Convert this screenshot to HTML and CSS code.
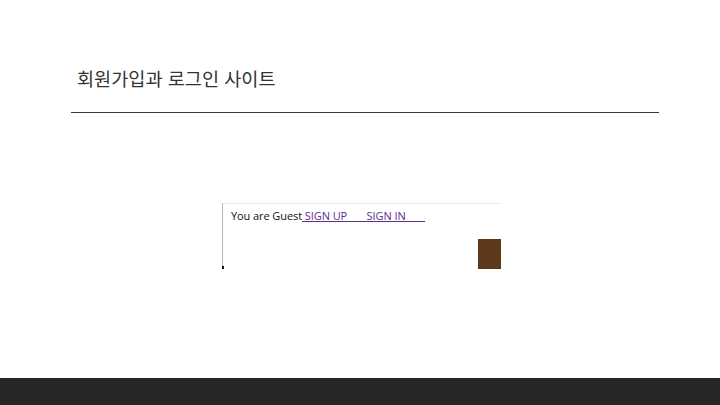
FILE: index.html
```html
<!DOCTYPE html>
<html lang="ko">
<head>
<meta charset="utf-8">
<link rel="stylesheet" href="styles.css">
</head>
<body>
<div class="slide">
  <main class="content">
    <h1 class="title">회원가입과 로그인 사이트</h1>
    <hr class="rule">
    <div class="shot-wrap">
      <div class="shot">
        <div class="shot-bar">
          <span class="guest">You are Guest</span><a class="link" href="#">&nbsp;SIGN UP&nbsp;&nbsp;&nbsp;&nbsp;&nbsp;&nbsp;&nbsp;SIGN IN&nbsp;&nbsp;&nbsp;&nbsp;&nbsp;&nbsp;&nbsp;</a>
        </div>
        <div class="shot-body">
          <div class="brown"></div>
        </div>
      </div>
    </div>
  </main>
  <footer class="footer"></footer>
</div>
</body>
</html>
```

FILE: styles.css
```css
html, body {
  margin: 0;
  padding: 0;
  background: #ffffff;
}
.slide {
  width: 720px;
  height: 405px;
  display: flex;
  flex-direction: column;
  overflow: hidden;
}
.content {
  flex: 1;
  display: flex;
  flex-direction: column;
  padding: 0 61px 0 71px;
}
.title {
  margin: 66px 0 0 6px;
  font-family: "Noto Sans CJK KR", "Noto Sans", sans-serif;
  font-weight: 400;
  font-size: 18.6px;
  line-height: 24px;
  color: #333333;
  height: 24px;
}
.rule {
  margin: 22px 0 0 0;
  border: 0;
  border-top: 1px solid #3a3a3a;
  height: 0;
}
.shot-wrap {
  display: flex;
  padding-left: 151px;
  margin-top: 90px;
}
.shot {
  width: 278px;
  height: 66px;
  border-left: 1px solid #b8b8b8;
  display: flex;
  flex-direction: column;
  position: relative;
}
.shot::after {
  content: "";
  position: absolute;
  left: -1px;
  bottom: 0;
  width: 2px;
  height: 3px;
  background: #111;
}
.shot-bar {
  border-top: 1px solid #e6e6e6;
  padding: 5px 0 0 8px;
  font-family: "Open Sans", "Liberation Sans", sans-serif;
  font-size: 11px;
  line-height: 14px;
  color: #111111;
  white-space: nowrap;
  letter-spacing: -0.08px;
}
.link {
  color: #5b2d90;
  text-decoration: underline;
}
.shot-body {
  flex: 1;
  display: flex;
  justify-content: flex-end;
  align-items: flex-end;
}
.brown {
  width: 23px;
  height: 30px;
  background: #5e3a1a;
}
.footer {
  height: 27px;
  background: #262626;
}
```
